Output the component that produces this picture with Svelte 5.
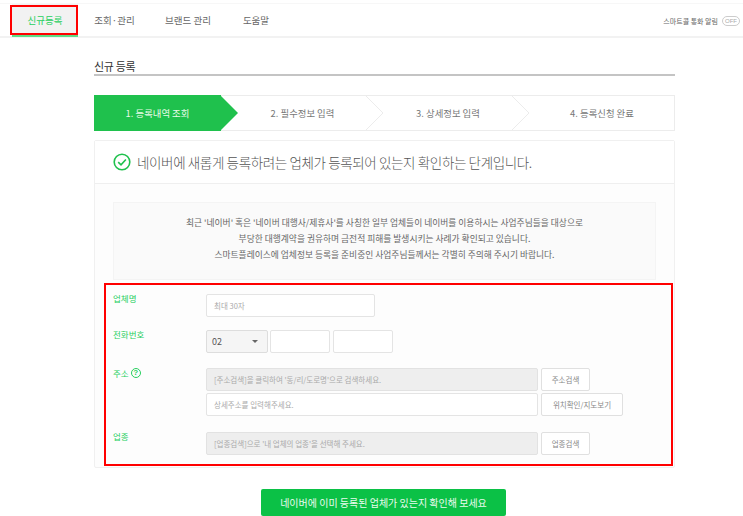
<script>
  const tabs = ["신규등록", "조회·관리", "브랜드 관리", "도움말"];
  const steps = ["1. 등록내역 조회", "2. 필수정보 입력", "3. 상세정보 입력", "4. 등록신청 완료"];
  const notice = [
    "최근 '네이버' 혹은 '네이버 대행사/제휴사'를 사칭한 일부 업체들이 네이버를 이용하시는 사업주님들을 대상으로",
    "부당한 대행계약을 권유하며 금전적 피해를 발생시키는 사례가 확인되고 있습니다.",
    "스마트플레이스에 업체정보 등록을 준비중인 사업주님들께서는 각별히 주의해 주시기 바랍니다.",
  ];
</script>

<div class="page">
  <header class="topbar">
    <nav class="tabs">
      {#each tabs as tab, i}
        <a class="tab" class:active={i === 0} href="#top">{tab}</a>
      {/each}
    </nav>
    <div class="alarm">
      <span>스마트콜 통화 알림</span>
      <span class="toggle">OFF</span>
    </div>
    <div class="mark-tab"></div>
  </header>

  <main class="content">
    <h1>신규 등록</h1>

    <ol class="steps">
      {#each steps as step, i}
        <li class="step" class:current={i === 0}>
          <span>{step}</span>
          {#if i < 3}
            <svg class="chevron" width="19" height="36" viewBox="0 0 19 36" aria-hidden="true">
              {#if i === 0}
                <path d="M0 0L18 18L0 36Z" fill="#1fc14d" />
              {:else}
                <path d="M0 0L18 18L0 36" fill="none" stroke="#ececec" />
              {/if}
            </svg>
          {/if}
        </li>
      {/each}
    </ol>

    <section class="card">
      <div class="card-head">
        <svg width="18" height="18" viewBox="0 0 18 18" aria-hidden="true">
          <circle cx="9" cy="9" r="7.8" fill="none" stroke="#1fc14d" stroke-width="1.6" />
          <path d="M5.2 9.2L8 11.9L12.9 6.5" fill="none" stroke="#1fc14d" stroke-width="1.6" />
        </svg>
        <h2>네이버에 새롭게 등록하려는 업체가 등록되어 있는지 확인하는 단계입니다.</h2>
      </div>

      <div class="card-body">
        <div class="notice">
          {#each notice as line}
            <p>{line}</p>
          {/each}
        </div>

        <form class="form">
          <div class="row name-row">
            <span class="label">업체명</span>
            <div class="field name-field">최대 30자</div>
          </div>

          <div class="row phone-row">
            <span class="label">전화번호</span>
            <div class="phone">
              <div class="select">02<i class="caret"></i></div>
              <div class="field phone-part"></div>
              <div class="field phone-part"></div>
            </div>
          </div>

          <div class="row addr-row">
            <span class="label">주소 <b class="help">?</b></span>
            <div class="stack">
              <div class="line">
                <div class="field wide disabled">[주소검색]을 클릭하여 '동/리/도로명'으로 검색하세요.</div>
                <button type="button">주소검색</button>
              </div>
              <div class="line">
                <div class="field wide">상세주소를 입력해주세요.</div>
                <button type="button" class="map-btn">위치확인/지도보기</button>
              </div>
            </div>
          </div>

          <div class="row biz-row">
            <span class="label">업종</span>
            <div class="line">
              <div class="field wide disabled">[업종검색]으로 '내 업체의 업종'을 선택해 주세요.</div>
              <button type="button">업종검색</button>
            </div>
          </div>
        </form>
      </div>
    </section>

    <button type="button" class="submit">네이버에 이미 등록된 업체가 있는지 확인해 보세요</button>
  </main>
</div>

<style>
  :global(body) {
    margin: 0;
    background: #fff;
  }

  .page {
    height: 516px;
    overflow: hidden;
    font-family: "Noto Sans CJK KR", "Liberation Sans", sans-serif;
    color: #555;
    padding-top: 3px;
    box-sizing: border-box;
  }

  .topbar {
    position: relative;
    height: 35px;
    display: flex;
    align-items: center;
    justify-content: space-between;
    border-top: 1px solid #f7f7f7;
    border-bottom: 2px solid #f2f2f2;
    box-sizing: border-box;
    padding-left: 12px;
    padding-right: 3px;
  }

  .tabs {
    display: flex;
    height: 100%;
  }

  .tab {
    width: 66px;
    height: 33px;
    box-sizing: border-box;
    display: flex;
    align-items: center;
    justify-content: center;
    font-size: 9.5px;
    color: #666;
    text-decoration: none;
    padding-top: 1px;
    padding-bottom: 2px;
  }

  .tab:nth-child(2) {
    width: 73px;
  }

  .tab:nth-child(3) {
    width: 74px;
  }

  .tab:nth-child(4) {
    width: 78px;
    margin-left: -8px;
  }

  .tab.active {
    background: #f2f2f2;
    color: #27cf5e;
    border-bottom: 2px solid #5fdc85;
    padding-bottom: 0;
  }

  .mark-tab {
    position: absolute;
    left: 10px;
    top: 1px;
    width: 68px;
    height: 30px;
    box-sizing: border-box;
    border: 2px solid #f00;
    pointer-events: none;
  }

  .alarm {
    display: flex;
    align-items: center;
    gap: 4px;
    font-size: 7px;
    color: #666;
    padding-top: 1px;
  }

  .toggle {
    border: 1px solid #ccc;
    border-radius: 8px;
    padding: 0 2px;
    font-size: 6px;
    line-height: 8px;
    color: #aaa;
    font-family: "Liberation Sans", sans-serif;
  }

  .content {
    width: 581px;
    margin-left: 94px;
  }

  h1 {
    margin: 0;
    height: 38px;
    box-sizing: border-box;
    padding-top: 19px;
    font-size: 11px;
    line-height: 18px;
    font-weight: 400;
    letter-spacing: -0.3px;
    color: #333;
    border-bottom: 2px solid #c4c4c4;
  }

  .steps {
    list-style: none;
    margin: 19px 0 0;
    padding: 0;
    height: 36px;
    display: grid;
    grid-template-columns: 127px 145px 146px 1fr;
    border: 1px solid #ececec;
    border-left: 0;
    box-sizing: border-box;
  }

  .step {
    position: relative;
    display: flex;
    align-items: center;
    justify-content: center;
    font-size: 9.4px;
    color: #777;
    padding-left: 18px;
    box-sizing: border-box;
  }

  .step.current {
    background: #1fc14d;
    color: #e9fbe9;
    margin: -1px 0;
    padding-left: 0;
  }

  .chevron {
    position: absolute;
    right: -18px;
    top: -1px;
    z-index: 1;
  }

  .step.current .chevron {
    top: 0;
  }

  .card {
    margin-top: 9px;
    height: 328px;
    box-sizing: border-box;
    border: 1px solid #f0f0f0;
    border-radius: 2px;
    background: #fdfdfd;
  }

  .card-head {
    height: 43px;
    box-sizing: border-box;
    background: #fff;
    border-bottom: 1px solid #efefef;
    display: flex;
    align-items: center;
    gap: 6px;
    padding-left: 18px;
  }

  .card-head h2 {
    margin: 0;
    font-size: 13.5px;
    line-height: 20px;
    font-weight: 300;
    color: #555;
    letter-spacing: -0.37px;
  }

  .card-body {
    padding: 18px 9px 0;
  }

  .notice {
    margin: 0 9px;
    height: 78px;
    box-sizing: border-box;
    background: #fafafa;
    border: 1px solid #f4f4f4;
    padding-top: 12px;
    text-align: center;
    font-size: 8.75px;
    line-height: 16px;
    color: #666;
  }

  .notice p {
    margin: 0;
    height: 16px;
  }

  .form {
    margin-top: 3px;
    height: 183px;
    box-sizing: border-box;
    border: 2px solid #f00;
    padding: 9px 7px 0;
    width: 569px;
    position: relative;
  }

  .row {
    display: grid;
    grid-template-columns: 93px 1fr;
    align-items: start;
  }

  .label {
    font-size: 8.5px;
    line-height: 12px;
    color: #27cf5e;
    display: flex;
    align-items: center;
    gap: 2px;
    margin-top: -2px;
  }

  .addr-row .label {
    margin-top: -1px;
  }

  .help {
    width: 10px;
    height: 10px;
    box-sizing: border-box;
    border: 1px solid #27cf5e;
    border-radius: 50%;
    display: inline-flex;
    align-items: center;
    justify-content: center;
    font-family: "Liberation Sans", sans-serif;
    font-size: 8px;
    line-height: 1;
    font-weight: 700;
  }

  .field {
    height: 23px;
    box-sizing: border-box;
    border: 1px solid #e4e4e4;
    border-radius: 2px;
    background: #fff;
    display: flex;
    align-items: center;
    padding-left: 7px;
    font-size: 7.5px;
    color: #aaa;
  }

  .field.disabled {
    background: #eee;
    border-color: #e2e2e2;
  }

  .name-field {
    width: 169px;
  }

  .phone-row {
    margin-top: 13px;
  }

  .phone {
    display: flex;
    gap: 2px;
  }

  .phone-part {
    width: 60px;
  }

  .phone-part:last-child {
    margin-left: 1px;
  }

  .select {
    width: 62px;
    height: 23px;
    box-sizing: border-box;
    border: 1px solid #ddd;
    border-radius: 2px;
    background: #f5f5f5;
    display: flex;
    align-items: center;
    justify-content: space-between;
    padding: 0 9px 0 5px;
    font-size: 9px;
    color: #555;
  }

  .caret {
    width: 0;
    height: 0;
    border-left: 3px solid transparent;
    border-right: 3px solid transparent;
    border-top: 3px solid #666;
  }

  .addr-row {
    margin-top: 15px;
  }

  .stack {
    display: flex;
    flex-direction: column;
    gap: 2px;
  }

  .line {
    display: flex;
    gap: 3px;
  }

  .wide {
    width: 332px;
  }

  button {
    height: 23px;
    width: 49px;
    padding: 0;
    box-sizing: border-box;
    border: 1px solid #e0e0e0;
    border-radius: 2px;
    background: #fff;
    font-family: inherit;
    font-size: 7.5px;
    color: #888;
  }

  .map-btn {
    width: 82px;
  }

  .biz-row {
    margin-top: 16px;
  }

  .submit {
    display: block;
    width: 245px;
    height: 27px;
    margin: 21px auto 0 167px;
    border: 0;
    border-radius: 2px;
    background: #0bc146;
    color: #eafbef;
    font-size: 10px;
  }
</style>
